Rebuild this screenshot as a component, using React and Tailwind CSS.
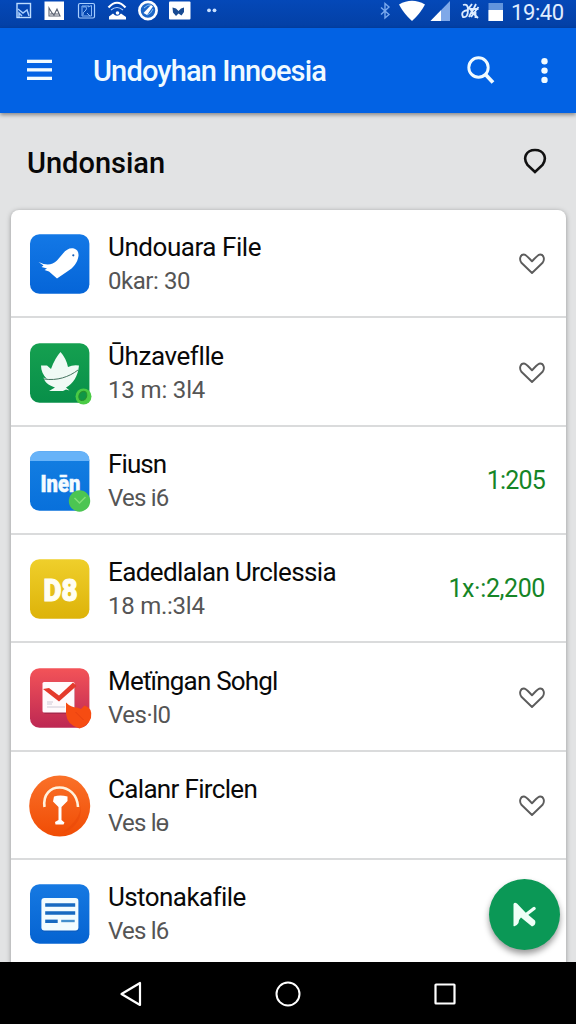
import React from 'react';

function Heart() {
  return (
    <svg width="26" height="22" viewBox="0 0 26 22" fill="none" stroke="#5c5c5c" strokeWidth="1.9" strokeLinejoin="round">
      <path d="M13 20 L2.400 9.800 C-0.200 6 1.500 1.500 4.800 1.500 C7.200 1.500 10.500 5.800 13 8.200 C15.500 5.800 18.800 1.500 21.200 1.500 C24.500 1.500 26.200 6 23.600 9.800 Z" />
    </svg>
  );
}

function Tile({ id, from, to, children, round }) {
  return (
    <svg className="shrink-0 overflow-visible" width="60" height="60" viewBox="0 0 60 60">
      <defs>
        <linearGradient id={id} x1="0" y1="0" x2="0" y2="1">
          <stop offset="0" stopColor={from} />
          <stop offset="1" stopColor={to} />
        </linearGradient>
      </defs>
      {round ? (
        <circle cx="29.700" cy="30" r="30.5" fill={`url(#${id})`} />
      ) : (
        <rect x="0" y="0.3" width="59.400" height="59.400" rx="9.5" fill={`url(#${id})`} />
      )}
      {children}
    </svg>
  );
}

function BirdIcon() {
  return (
    <Tile id="bird" from="#1378e6" to="#0565d8">
      <path d="M8.500 28 C17 32 22 31 27 26.500 L33 19.500 C36 15.500 40 13.500 44 14.500 Q49 16 48.500 22 C47.500 29 43 34 38 37 L27 44.500 L19 37.500 L14.500 36 L17 34.500 L11.500 33 L13.500 31.500 Z" fill="#fff" />
      <circle cx="43.300" cy="21.300" r="1.100" fill="#155fb8" />
    </Tile>
  );
}

function LotusIcon() {
  return (
    <Tile id="lotus" from="#15a050" to="#088f49">
      <path d="M11 22.500 L17 22.500 L21 26 Q25 15 30.500 9 Q36 15 38 24 Q43 21.500 49 22.500 C48 33 43 41 36 44.500 L39.500 47.500 L36 46.500 L33 48 H19 L25 44.500 C18 42 14.500 39 13.500 34.500 L17 36 C13 32 11 28 11 22.500 Z" fill="#f0faf5" />
      <path d="M14 36 C27 38 39 34 48 27" fill="none" stroke="#45735f" strokeWidth="1" />
      <circle cx="53.500" cy="53.500" r="8" fill="#4acb45" />
      <ellipse cx="52.800" cy="53" rx="3.800" ry="4.800" fill="#109746" stroke="#268f2e" transform="rotate(25 53 53)" />
    </Tile>
  );
}

function BlueLabelIcon() {
  return (
    <Tile id="label" from="#147fe2" to="#0870db">
      <path d="M0 10 V9.800 Q0 0.300 9.500 0.300 H49.900 Q59.400 0.300 59.400 9.800 V10 Z" fill="#68b3f8" />
      <text x="10.500" y="41" textLength="40" lengthAdjust="spacingAndGlyphs" fill="#f5fbff" stroke="#f5fbff" strokeWidth="0.500" fontFamily="Roboto, sans-serif" fontWeight="900" fontSize="24">Inēn</text>
      <circle cx="49.500" cy="50" r="10.700" fill="#4cc552" />
      <path d="M44.500 47 L49.500 52 L55.500 46" fill="none" stroke="#83df78" strokeWidth="1.500" />
    </Tile>
  );
}

function YellowIcon() {
  return (
    <Tile id="yellow" from="#efcf2b" to="#ddb309">
      <text x="13.500" y="41.500" textLength="34" lengthAdjust="spacingAndGlyphs" fill="#fffef2" stroke="#fffef2" strokeWidth="1.200" fontFamily="Roboto, sans-serif" fontWeight="900" fontSize="32">D8</text>
    </Tile>
  );
}

function MailIcon() {
  return (
    <Tile id="mail" from="#f35358" to="#bd2853">
      <path d="M14 17 H45 V43 Q45 46 42 46 H16 Q13 46 13 43 Z" fill="#861f43" opacity="0.5" />
      <rect x="12.500" y="14" width="32" height="30.500" rx="1.500" fill="#fffafc" />
      <path d="M13 21 L19 20 L29 27.500 L43 14.500 L46.500 18 L29 33.500 Z" fill="#e43a2c" />
      <path d="M17 34 H23 M17 36 H22 M17 39 H35" stroke="#c8c4d1" strokeWidth="0.900" />
      <path d="M36 34.500 Q41 39.500 47 39.500 L51 41 L54.500 37.500 Q63 40 61 50 Q58 58 49.500 60.500 Q37 57 36 46 Z" fill="#f64c12" />
      <path d="M45.500 44 L53.500 52" stroke="#e64010" strokeWidth="1" />
    </Tile>
  );
}

function GlassIcon() {
  return (
    <Tile id="glass" from="#fa7129" to="#f04c05" round>
      <path d="M50 25 Q54 41 32 57 Q55 49 50 25" fill="#e94a0a" opacity="0.6" />
      <path d="M14.500 31 C11 5 47 5 48 31" fill="none" stroke="#fff2dd" strokeWidth="2.600" />
      <path d="M24 20.500 Q30 18.500 37.500 20.500 L37.500 25 L31.500 31 V44 L34.500 46.500 L33.500 48.500 H25.500 L25 46 L28.500 44 V31 L23 25.500 Z" fill="#fff" />
    </Tile>
  );
}

function FormIcon() {
  return (
    <Tile id="form" from="#1679e2" to="#0563d1">
      <rect x="11.700" y="15" width="37" height="33" rx="3" fill="#1058b5" opacity="0.5" />
      <rect x="11.400" y="14" width="37" height="32.500" rx="3" fill="#f2fcff" />
      <path d="M15.200 21 H45.200 M15.200 29 H45.200" stroke="#176ac1" strokeWidth="3.600" />
      <path d="M15.200 37.300 H27.700" stroke="#176ac1" strokeWidth="3.400" />
      <path d="M31.200 37 H44.700" stroke="#438fcd" strokeWidth="2.400" />
    </Tile>
  );
}

const rows = [
  { title: 'Undouara File', sub: '0kar: 30', icon: BirdIcon, ts: 'tracking-[-0.45px]', ss: 'tracking-[-0.45px]' },
  { title: 'Ūhzaveflle', sub: '13 m: 3l4', icon: LotusIcon, ts: 'tracking-[-0.4px]', ss: 'tracking-[-0.15px]' },
  { title: 'Fiusn', sub: 'Ves i6', icon: BlueLabelIcon, amount: '1:205', ts: 'tracking-[-0.9px]', ss: 'tracking-[-0.8px]', as: 'tracking-[-0.8px]' },
  { title: 'Eadedlalan Urclessia', sub: '18 m.:3l4', icon: YellowIcon, amount: '1x·:2,200', ts: 'tracking-[-0.61px]', ss: 'tracking-[-0.25px]', as: 'tracking-[-0.4px]' },
  { title: 'Metïngan Sohgl', sub: 'Ves·l0', icon: MailIcon, ts: 'tracking-[-0.8px]', ss: 'tracking-[-0.5px]' },
  { title: 'Calanr Firclen', sub: 'Ves lɵ', icon: GlassIcon, ts: 'tracking-[-0.67px]', ss: 'tracking-[-0.8px]' },
  { title: 'Ustonakafile', sub: 'Ves l6', icon: FormIcon, fab: true, ts: 'tracking-[-0.58px]', ss: 'tracking-[-0.8px]' },
];

function StatusBar() {
  return (
    <div className="flex h-7 shrink-0 items-start justify-between bg-linear-to-b from-[#0448b8] to-[#0340a5] pl-4 pr-2.5">
      <svg width="210" height="24" viewBox="16 0 210 24" fill="none">
        <rect x="17" y="3.500" width="13.500" height="14" stroke="#bddcff" strokeWidth="1.400" />
        <path d="M18 9 L23 13 L27 10 L29 16 M19 17 V13 L22 16" stroke="#a8ceff" strokeWidth="1.500" />
        <rect x="44.500" y="1.500" width="19.500" height="18.500" fill="#fff" />
        <path d="M49 16 V8 L52 13 L54 15 L57 9 L60 16 Z M50 14 H59" stroke="#5a6170" strokeWidth="1.100" />
        <rect x="78.500" y="3.500" width="16" height="14.500" rx="1.500" stroke="#a8ceff" strokeWidth="1.200" />
        <path d="M83 7 Q88 6 86 10 Q82 13 83 15 M87 13 L90 16 M88 7 L91.500 5.500 V16 H82 V6 H89" stroke="#8bbaf8" strokeWidth="1" />
        <path d="M108.500 7.500 Q117 -2 125.500 7.500" stroke="#fff" strokeWidth="2.200" />
        <path d="M111 10 Q117 5 123 10" stroke="#b3d3ff" strokeWidth="1.200" />
        <path d="M109 19.500 V16.500 L113 13.500 Q117 18 121 13.500 L126 17 V19.500 Z" fill="#fff" />
        <circle cx="117.500" cy="13" r="1.800" fill="#fff" />
        <circle cx="148" cy="10.500" r="8.600" fill="#1d67c7" stroke="#fff" strokeWidth="2.700" />
        <path d="M143.500 13 L151 5 L153 6.500 L147 15 Z" fill="#fff" />
        <path d="M144 8 Q148 4 151 5 M147 15 Q151 14 153 9" stroke="#8bc1f5" strokeWidth="1" />
        <rect x="169" y="1.500" width="21.500" height="18" rx="1" fill="#fff" />
        <path d="M172.500 7.500 L176 8.500 L178.500 11 L181 8.500 L184 7.500 V12 L181.500 15.500 L178.500 13.500 L176 16 L173 12.500 Z" fill="#174a92" />
        <circle cx="209" cy="10.300" r="1.900" fill="#c9e0ff" />
        <circle cx="214.500" cy="10.300" r="1.900" fill="#c9e0ff" />
      </svg>
      <div className="flex items-start">
        <svg width="126" height="24" viewBox="378 0 126 24" fill="none">
          <path d="M381 7.500 L389 14.500 L385 18 V3.500 L389 7 L381 14.500" stroke="#7aa9ed" strokeWidth="1.400" />
          <path d="M399 4.500 Q412 -3 425 4.500 Q420 14 412 21 Q404 14 399 4.500 Z" fill="#fff" />
          <path d="M430.500 21 L450 1 V21 Z" fill="#7fa8e8" />
          <path d="M430.500 21 L441 10.200 V21 Z" fill="#fff" />
          <path d="M463 5 Q468 3 468 10 Q468 18 463 17 Q460 11 468 10 M472 4 L469 8 L472 11 L469 17 M470 9 H478.500 M476 4 L472 12 L478 18 M478.500 7 L471 17 M475.500 12 V18" stroke="#dcebff" strokeWidth="1.800" />
          <path d="M488.500 3 H503 V21 H488.500 Z" fill="#6394dc" />
          <rect x="488.500" y="10" width="14.500" height="11" fill="#fff" />
        </svg>
        <span className="ml-[7px] w-[55px] whitespace-nowrap text-[22px] leading-[26px] tracking-[-0.4px] text-[#e0edff]">19:40</span>
      </div>
    </div>
  );
}

function AppBar() {
  return (
    <header className="relative z-10 flex h-[85px] shrink-0 items-center bg-[#0262e4] pl-[27px] pr-[28px] text-[#f0faff] shadow-[0_2px_4px_rgba(0,0,0,0.4)]">
      <svg className="mb-[2px]" width="25" height="22" viewBox="0 0 25 22" fill="currentColor">
        <rect y="0.700" width="25" height="3.300" />
        <rect y="9.200" width="25" height="3.300" />
        <rect y="17.700" width="25" height="3.300" />
      </svg>
      <h1 className="ml-[41px] whitespace-nowrap text-[29px] leading-9 font-medium tracking-[-0.85px]">Undoyhan Innoesia</h1>
      <svg className="ml-auto" width="28" height="29" viewBox="0 0 28 29" fill="none" stroke="currentColor">
        <circle cx="11.500" cy="11.500" r="9.700" strokeWidth="2.900" />
        <path d="M18.500 18.500 L26 26.500" strokeWidth="3.800" />
      </svg>
      <svg className="ml-[46px]" width="7" height="26" viewBox="0 0 7 26" fill="currentColor">
        <circle cx="3.500" cy="3.300" r="3.200" />
        <circle cx="3.500" cy="12.600" r="3.200" />
        <circle cx="3.500" cy="21.900" r="3.200" />
      </svg>
    </header>
  );
}

function Row({ row }) {
  const Icon = row.icon;
  return (
    <li className="relative flex h-[108.35px] shrink-0 items-center border-b-2 border-[#dadbdc] pl-[19px] pr-[21px] pt-[2.4px]">
      <Icon />
      <div className="ml-[18px] flex flex-col whitespace-nowrap">
        <span className={`text-[26px] leading-[34px] text-[#090909] ${row.ts}`}>{row.title}</span>
        <span className={`text-[24px] leading-[34px] text-[#555] ${row.ss}`}>{row.sub}</span>
      </div>
      <div className="ml-auto flex">
        {row.amount && <span className={`text-[25px] leading-8 text-[#158526] ${row.as}`}>{row.amount}</span>}
        {!row.amount && !row.fab && <Heart />}
      </div>
      {row.fab && (
        <button className="absolute right-[6.5px] top-[19px] flex size-[71px] items-center justify-center rounded-full bg-[#0b9856] shadow-[0_4px_6px_rgba(0,0,0,0.4)]">
          <svg width="24" height="25" viewBox="0 0 24 25" fill="none">
            <path d="M1.500 2 Q2.500 0 5 1.500 L13.500 10.500 L23 18.500 Q24.500 23 20 24.500 L9 15.500 Q7 17 6.500 21 Q4 25 1.500 24 Z" fill="#effff7" />
            <path d="M13.500 13 L22 6.500" stroke="#effff7" strokeWidth="3.400" strokeLinecap="round" />
          </svg>
        </button>
      )}
    </li>
  );
}

export default function App() {
  return (
    <div className="flex h-[1024px] w-[576px] flex-col overflow-hidden bg-[#e2e3e4] font-[Roboto,sans-serif]">
      <StatusBar />
      <AppBar />
      <main className="flex min-h-0 flex-1 flex-col overflow-hidden">
        <div className="flex h-[97px] shrink-0 items-center justify-between pl-[27px] pr-[29px] pt-[2px]">
          <h2 className="whitespace-nowrap text-[29px] leading-9 font-medium tracking-[0px] text-[#080808]">Undonsian</h2>
          <svg className="mb-[3px]" width="24" height="26" viewBox="0 0 24 26" fill="none" stroke="#111" strokeWidth="2.600">
            <path d="M12 24 L4.500 17 C-0.500 10 3 2 12 2 C21 2 24.500 10 19.500 17 Z" />
          </svg>
        </div>
        <ul className="ml-[11px] mr-[10px] flex flex-col rounded-t-lg bg-white shadow-[0_1px_5px_rgba(0,0,0,0.35)]">
          {rows.map((row) => (
            <Row key={row.title} row={row} />
          ))}
        </ul>
      </main>
      <nav className="flex h-[62px] shrink-0 items-center justify-between bg-black pl-[118.5px] pr-[120px] pb-px pt-[2px]">
        <svg width="24" height="26" viewBox="0 0 24 26" fill="none" stroke="#fff" strokeWidth="2.200" strokeLinejoin="round">
          <path d="M2.500 13 L21 2 V24 Z" />
        </svg>
        <svg width="26" height="26" viewBox="0 0 26 26" fill="none" stroke="#fff" strokeWidth="2">
          <circle cx="13" cy="13" r="11.500" />
        </svg>
        <svg width="22" height="22" viewBox="0 0 22 22" fill="none" stroke="#fff" strokeWidth="2.200">
          <rect x="1.500" y="1.500" width="19" height="19" rx="0.500" />
        </svg>
      </nav>
    </div>
  );
}
